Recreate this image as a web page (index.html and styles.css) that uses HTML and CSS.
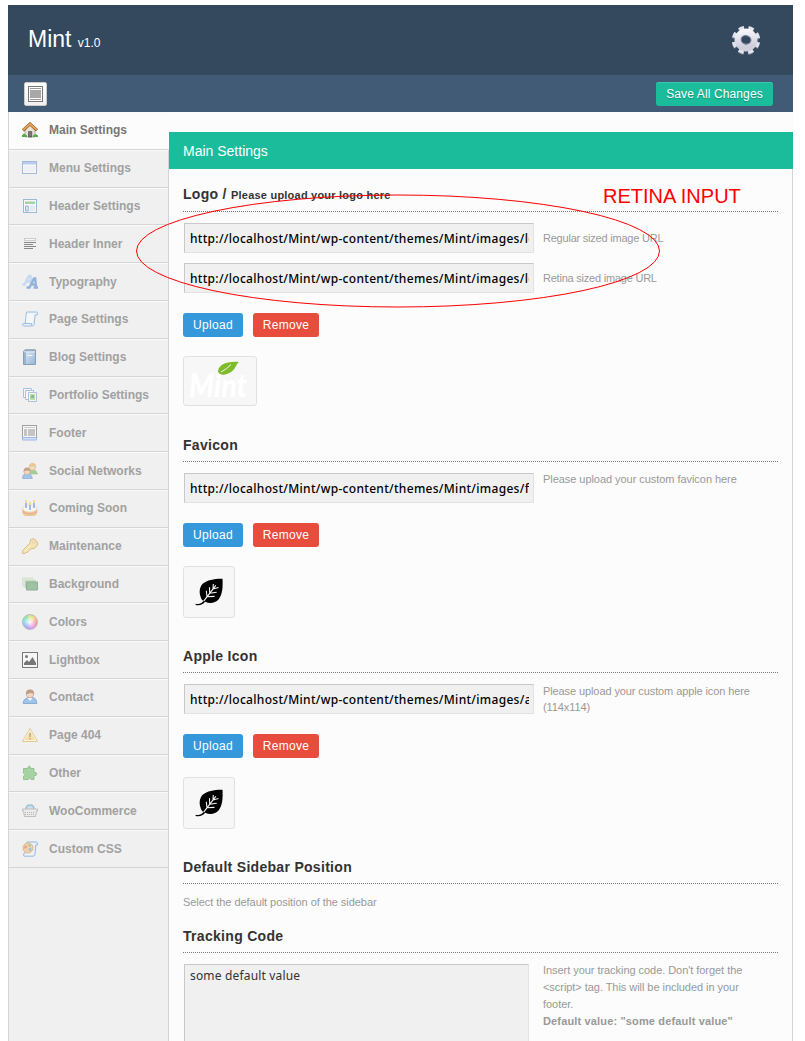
FILE: index.html
```html
<!DOCTYPE html>
<html lang="en">
<head>
<meta charset="utf-8">
<title>Mint</title>
<link rel="stylesheet" href="styles.css">
</head>
<body>
<svg width="0" height="0" class="defs">
  <defs>
    <linearGradient id="silver" x1="0" y1="0" x2="0.3" y2="1"><stop offset="0" stop-color="#f6f6fa"/><stop offset="1" stop-color="#cfcfdc"/></linearGradient>
    <linearGradient id="blueG" x1="0" y1="0" x2="1" y2="1"><stop offset="0" stop-color="#b8daf5"/><stop offset="1" stop-color="#3f80bd"/></linearGradient>
    <symbol id="leaf" viewBox="0 0 28 28">
      <path d="M27.500.8C20 .6 12 2 8 5.600 4.500 9 4 14 5.500 18.500 6 20.500 7 22 8.500 23 6.500 25.500 4.500 26.500.6 25.800L.6 27c4.500.8 7.300-.5 9.600-3.200C15 26 20.500 25 23.500 21.500 27.500 17 28 9 27.500.8Z" fill="#000"/>
      <path d="M8.700 23.200 20.800 7.400M12 18.800l-.7-6M14.700 15.200l-.2-6M18 11l.3-5M12 18.800l7.500-.4M14.700 15.200l7-1M18 11l5.500-1.500" fill="none" stroke="#f7f7f7" stroke-width="1.100"/>
    </symbol>
  </defs>
</svg>
<div class="panel">
  <header class="head">
    <div class="brand">Mint <small>v1.0</small></div>
    <svg class="gear" width="34" height="34" viewBox="0 0 34 34">
      <g transform="rotate(10 17 17)">
        <circle cx="17" cy="18" r="11.700" fill="none" stroke="#77778a" stroke-width="5" stroke-dasharray="5 4.189"/>
        <circle cx="17" cy="17" r="11.700" fill="none" stroke="#e4e4ee" stroke-width="5" stroke-dasharray="5 4.189"/>
        <circle cx="17" cy="17" r="8" fill="none" stroke="url(#silver)" stroke-width="7"/>
        <ellipse cx="17" cy="16.800" rx="5" ry="4.200" fill="#34495e" stroke="#8585a0" stroke-width="1"/>
      </g>
    </svg>
  </header>
  <div class="bar">
    <div class="toggle"><svg width="15" height="16" viewBox="0 0 15 16"><rect x=".5" y=".5" width="14" height="15" fill="#fff" stroke="#777"/><path d="M2 2.500h11M2 13.500h11" stroke="#999"/><path d="M2 4h11v8H2z" fill="#a8a8a8"/></svg></div>
    <div class="btn save">Save All Changes</div>
  </div>
  <div class="body">
    <nav class="menu">
      <div class="item active"><svg viewBox="0 0 16 16"><path d="M3 7.500 8 3l5 4.500V15H3z" fill="#e8e3d8" stroke="#9a927f" stroke-width=".7"/><path d="M6.500 9.500h3.300V15H6.500z" fill="#777" stroke="#444" stroke-width=".6"/><path d="M1 8.400 8 2l7 6.400" fill="none" stroke="#8a4d18" stroke-width="3"/><path d="M1.200 8 8 2l6.800 6" fill="none" stroke="#e3a356" stroke-width="1.900"/><path d="M0 15v-2l2-1.500L5 13.500V15zM11 15v-1.500l2.500-1.500L16 13.500V15z" fill="#54aa4c"/></svg>Main Settings</div>
      <div class="item"><svg viewBox="0 0 16 16"><rect x=".5" y="1.500" width="14" height="12" fill="#fff" stroke="#5b86c9"/><path d="M1 2h13v2.500H1z" fill="#86aee8"/><path d="M2 6h11v6H2z" fill="#edf1f8"/></svg>Menu Settings</div>
      <div class="item"><svg viewBox="0 0 16 16"><rect x="1.500" y="1.500" width="13" height="13" fill="#fff" stroke="#4e82b8"/><path d="M3 3.500h10V6H3z" fill="#64b153"/><path d="M3.500 8h2.700v5H3.500z" fill="#cfe0f8" stroke="#397ac0"/><path d="M7.500 7.500H13v5.500H7.500z" fill="#dce5f2"/></svg>Header Settings</div>
      <div class="item"><svg viewBox="0 0 16 16"><rect x="2.500" y="2.500" width="11" height="2" fill="#fff" stroke="#aaa"/><path d="M2 6.500h12M2 8.500h9M2 10.500h12M2 12.500h9" stroke="#222"/></svg>Header Inner</div>
      <div class="item"><svg viewBox="0 0 16 16"><path d="M.5 10.500h2L7 2h1.500l.5 7M3.500 7.500h5" fill="none" stroke="#9cc6ef" stroke-width="2.400"/><path d="M4.500 13.500h3L12 4.500h1.200l.8 8.500M11.500 13.500H16M8.700 10.500h5" fill="none" stroke="#3977cb" stroke-width="2.400"/></svg>Typography</div>
      <div class="item"><svg viewBox="0 0 16 16"><path d="M4.500 1h10q1.500 0 1 2l-.5 1h-1.800L12 13.500q-.5 1.500-2 1.500H1.500Q0 14.500 1 12.500h2.200z" fill="#e0f0fd" stroke="#4c8ecb"/><path d="M5 2.500h7l-1 9.500H4z" fill="#f8fcff"/><path d="M2 12.500h7.500v2" stroke="#4c8ecb" fill="none"/></svg>Page Settings</div>
      <div class="item"><svg viewBox="0 0 16 16"><path d="M1.500 2.500 3 .8h10.500v14.700h-12z" fill="#4779a8" stroke="#244e78"/><path d="M4 3h9v12H4z" fill="url(#blueG)"/><path d="M5.500 6.500h5" stroke="#fff"/><path d="M2 2.800h11" stroke="#fff" stroke-width=".8"/></svg>Blog Settings</div>
      <div class="item"><svg viewBox="0 0 16 16"><g fill="#fff" stroke="#6a96c8"><path d="M1.500 1.500h8v9h-8z"/><path d="M3.500 3.500h8v9h-8z"/><path d="M6.500 5.500h8v9h-8z"/></g><path d="M8 7h5v6H8z" fill="#8cc763"/><path d="M9 9q1.500-2 3 0v2H9z" fill="#1f7d3b"/></svg>Portfolio Settings</div>
      <div class="item"><svg viewBox="0 0 16 16"><rect x=".5" y=".5" width="14" height="14" fill="#fff" stroke="#555"/><path d="M2 2.500h11" stroke="#aaa"/><path d="M2 4h3v7H2zM6 4h7v7H6z" fill="#999"/><path d="M.5 12.500h14v2.500H.5z" fill="#b9d3fb" stroke="#4a7fd6"/></svg>Footer</div>
      <div class="item"><svg viewBox="0 0 16 16"><path d="M6.500 11q0-4 4-4t5 4z" fill="#5aae45" stroke="#3c8a30" stroke-width=".6"/><circle cx="10.500" cy="4" r="3.300" fill="#f5c58e" stroke="#c28b25" stroke-width=".7"/><path d="M7 4q0-4 3.500-4T14 4q-2-1.500-7 0" fill="#dba335"/><path d="M.6 15.500Q.3 10.500 5 10.500t5.300 5z" fill="#4f9ee8" stroke="#2c6cb8" stroke-width=".7"/><circle cx="5" cy="8.500" r="3.200" fill="#f3be93" stroke="#a45a28" stroke-width=".6"/><path d="M1.700 8.500q0-4 3.300-4t3.300 4Q5 6.500 1.700 8.500" fill="#9a5428"/></svg>Social Networks</div>
      <div class="item"><svg viewBox="0 0 16 16"><path d="M.8 8.500v4Q1 16 7.800 16t7-3.500v-4z" fill="#f1a940" stroke="#c3762a" stroke-width=".6"/><path d="M.8 11.500q7 5 14 0" fill="none" stroke="#e0523f"/><ellipse cx="7.800" cy="8.500" rx="7" ry="3.500" fill="#fffdf5" stroke="#d7bf86" stroke-width=".6"/><path d="M4 3v5M8 5v5M12 3v5" stroke="#5a86dd" stroke-width="2"/><path d="M4 0v3M8 2v3M12 0v3" stroke="#efc51b" stroke-width="1.800"/></svg>Coming Soon</div>
      <div class="item"><svg viewBox="0 0 16 16"><path d="M8.700 1.500 12 .6 15.400 4v3.500L12 10.500l-3 .2L5 14.500l-1.500-.2-.5 1.200H.6v-3l7.200-7.200z" fill="#f9d878" stroke="#c98a22"/><path d="M2 14 9 7" stroke="#fff1b5"/><circle cx="12" cy="4" r="1.300" fill="#fff" stroke="#c98a22" stroke-width=".6"/></svg>Maintenance</div>
      <div class="item"><svg viewBox="0 0 16 16"><path d="M0 2h11v8H0z" fill="#c9dfc6" stroke="#a9cda5" stroke-width=".6"/><path d="M2.500 4H14v8H2.500z" fill="#8dbd88" stroke="#cfe8cb" stroke-width=".6"/><path d="M4.500 6h11v8h-11z" fill="#52945a" stroke="#2e7537"/></svg>Background</div>
      <div class="item"><div class="wheel"></div>Colors</div>
      <div class="item"><svg class="solid" viewBox="0 0 16 16"><rect x=".5" y=".5" width="15" height="15" fill="#f6f6f6" stroke="#777"/><circle cx="4.500" cy="4.500" r="1.500" fill="#777"/><path d="M2 13v-2l3-3 2 2 3.500-5L14 11v2z" fill="#777"/></svg>Lightbox</div>
      <div class="item"><svg viewBox="0 0 16 16"><path d="M1.200 14.500q0-5.500 6.800-6t6.800 6z" fill="#4b9bec" stroke="#2b68b0"/><path d="M5.500 9h5L8 12z" fill="#fff"/><circle cx="8" cy="5" r="3.800" fill="#f2c096" stroke="#985d36" stroke-width=".7"/><path d="M4 5.500Q3.500.5 8 .5t4 5Q10 2.500 4 5.500" fill="#8d4f27"/></svg>Contact</div>
      <div class="item"><svg viewBox="0 0 16 16"><path d="M8 1.500 15.500 14.500H.5z" fill="#fff" stroke="#e0a32a" stroke-linejoin="round"/><path d="M8 4 13.500 13.300h-11z" fill="#fbd45b"/><path d="M8 6v4M8 11v1.500" stroke="#7c5b1c" stroke-width="1.400"/></svg>Page 404</div>
      <div class="item"><svg viewBox="0 0 16 16"><path d="M1.500 3.500H6V2q1-2 2.500 0v1.500h3.500v4h2q1.800 1.500 0 3h-2v4H9q-.2-3-3 0H1.500V11q3-1.200 0-3z" fill="#60b85b" stroke="#3f9640"/></svg>Other</div>
      <div class="item"><svg viewBox="0 0 16 16"><path d="M4 6q0-4 4-4t4 4" fill="#a9cfec" stroke="#4d94c4" stroke-width="1.600"/><path d="M.5 6h15v2h-1l-1 5.500h-11L1.500 8h-1z" fill="#e8e8e8" stroke="#8e8e8e"/><path d="M3 9.500h10M3 11.500h10" stroke="#777" stroke-dasharray="1 1"/></svg>WooCommerce</div>
      <div class="item"><svg viewBox="0 0 16 16"><path d="M5 1h9.500q1.500.5 1 3h-1.700L13 13.500q-.5 1.700-2 1.700H2q-1-1 0-3h1z" fill="#e7f2ff" stroke="#3e85c7"/><circle cx="6" cy="7" r="5" fill="#efb65f" stroke="#d67e3b"/><circle cx="3.500" cy="6" r="1.500" fill="#e2514a"/><circle cx="7.500" cy="4.500" r="1.400" fill="#6bb354"/><circle cx="8" cy="8.500" r="1.500" fill="#4d92df"/></svg>Custom CSS</div>
    </nav>
    <main class="main">
      <h2 class="title">Main Settings</h2>
      <div class="content">
        <section class="group first">
          <h3>Logo / <small>Please upload your logo here</small></h3>
          <div class="row mid"><input value="http://localhost/Mint/wp-content/themes/Mint/images/logo.png"><p>Regular sized image URL</p></div>
          <div class="row mid second"><input value="http://localhost/Mint/wp-content/themes/Mint/images/logo@2x.png"><p>Retina sized image URL</p></div>
          <div class="actions"><span class="btn up">Upload</span><span class="btn rm">Remove</span></div>
          <div class="preview wide"><svg width="72" height="48" viewBox="0 0 72 48"><text x="5" y="40" class="script" textLength="58" lengthAdjust="spacingAndGlyphs">Mint</text><path d="M34 15C34 8 42 4 55 5 51 8 52 15 41 17.500Q36 18.500 34 15Z" fill="#7dbd29"/><path d="M37 15Q43 12 47 7.500" fill="none" stroke="#f7f7f7"/></svg></div>
        </section>
        <section class="group fav">
          <h3>Favicon</h3>
          <div class="row"><input value="http://localhost/Mint/wp-content/themes/Mint/images/favicon.png"><p>Please upload your custom favicon here</p></div>
          <div class="actions"><span class="btn up">Upload</span><span class="btn rm">Remove</span></div>
          <div class="preview"><svg width="28" height="28"><use href="#leaf"/></svg></div>
        </section>
        <section class="group">
          <h3>Apple Icon</h3>
          <div class="row tight"><input value="http://localhost/Mint/wp-content/themes/Mint/images/apple.png"><p>Please upload your custom apple icon here (114x114)</p></div>
          <div class="actions"><span class="btn up">Upload</span><span class="btn rm">Remove</span></div>
          <div class="preview"><svg width="28" height="28"><use href="#leaf"/></svg></div>
        </section>
        <section class="group side">
          <h3>Default Sidebar Position</h3>
          <p>Select the default position of the sidebar</p>
        </section>
        <section class="group track">
          <h3>Tracking Code</h3>
          <div class="row"><textarea>some default value</textarea><p>Insert your tracking code. Don't forget the &lt;script&gt; tag. This will be included in your footer.<br><b>Default value: "some default value"</b></p></div>
        </section>
      </div>
    </main>
  </div>
  <svg class="ring" width="526" height="114" viewBox="0 0 526 114"><ellipse cx="263" cy="57" rx="261.500" ry="56" fill="none" stroke="#f00"/></svg>
  <div class="note">RETINA INPUT</div>
</div>
</body>
</html>
```
FILE: styles.css
```css
* { box-sizing: border-box; }
html, body { height: 100%; overflow: hidden; }
body { margin: 0; padding: 5px 12px 0 8px; background: #fff; font: 12px "Liberation Sans", Arial, sans-serif; color: #333; }
h2, h3, p { margin: 0; }
.defs { position: absolute; }
.panel { position: relative; width: 785px; height: 1036px; overflow: hidden; display: flex; flex-direction: column; }
.head { flex: none; height: 70px; background: #34495e; display: flex; justify-content: space-between; align-items: center; padding: 0 30px 0 20px; color: #fff; }
.brand { padding-top: 1px; font-size: 23px; line-height: 26px; }
.brand small { font-size: 12px; }
.bar { flex: none; height: 37px; background: #415b76; display: flex; justify-content: space-between; align-items: center; padding: 0 20px 0 16px; }
.toggle { width: 23px; height: 24px; background: linear-gradient(#fff, #f1f1f1); border: 1px solid #ccc; border-radius: 2px; display: flex; align-items: center; justify-content: center; }
.btn { height: 24px; line-height: 25px; border-radius: 3px; color: #fff; font-size: 12px; letter-spacing: .3px; text-align: center; }
.save { width: 117px; background: #1abc9c; box-shadow: inset 0 1px #3bc9ad; text-shadow: 0 1px 1px #148f77; letter-spacing: .12px; }
.body { flex: 1; display: flex; background: #fcfcfc; border-left: 1px solid #d5d5d5; }
.menu { width: 160px; background: linear-gradient(90deg, #f0f0f0 159px, #d5d5d5 159px); }
.item { height: 37.8px; display: flex; align-items: center; gap: 11px; padding: 0 0 0 13px; font-weight: bold; color: #a1a1a1; border-bottom: 1px solid #d5d5d5; border-right: 1px solid #d5d5d5; box-shadow: inset 0 1px #fafafa; }
.item svg { width: 16px; height: 16px; opacity: .5; }
.item .solid { opacity: 1; }
.item.active { background: #fcfcfc; color: #777; border-right-color: #fcfcfc; }
.item.active svg { opacity: 1; }
.wheel { width: 16px; height: 16px; border-radius: 50%; opacity: .6; border: 1px solid #999; background: radial-gradient(circle, #fff 5%, transparent 65%), conic-gradient(#cde645, #ffb52e 50deg, #ff5a68 95deg, #e45bee 155deg, #6c78fa 215deg, #40d3eb 275deg, #4ee06c 325deg, #cde645); }
.main { flex: 1; padding-top: 20px; }
.title { height: 37px; padding-left: 14px; line-height: 38px; background: #1abc9c; color: #fff; font-size: 14px; font-weight: normal; }
.content { height: 872px; padding: 0 14px; border-right: 1px solid #d5d5d5; }
.group { padding-top: 24px; }
.fav { padding-top: 25px; }
.group h3 { height: 31px; line-height: 29px; border-bottom: 1px dotted #777; font-size: 14px; letter-spacing: .3px; white-space: nowrap; }
.group.first { padding-top: 12px; }
.first h3 { line-height: 27px; }
.group h3 small { font-size: 11px; letter-spacing: .22px; }
.row { display: flex; gap: 9px; margin-top: 11px; padding-left: 1px; }
.row.second { margin-top: 10px; }
.row.mid { align-items: center; }
.row p, .side p { font-size: 11px; line-height: 17px; color: #999; letter-spacing: -.05px; }
.row p { flex: 0 0 216px; }
.row:not(.mid) p { margin-top: -2px; }
.row.mid p { letter-spacing: -.22px; }
.row.tight { height: 30px; }
.row.tight p { line-height: 16px; letter-spacing: -.1px; margin-top: -1px; }
.row b { letter-spacing: .15px; }
input, textarea { display: block; flex: none; margin: 0; border: 1px solid #e2e2e2; border-top-color: #c8c8c8; border-left-color: #c8c8c8; border-radius: 0; outline: 0; background: #f0f0f0; font-family: "Noto Sans", sans-serif; font-size: 12px; }
input { width: 350px; height: 30px; padding: 0 4px 0 5px; color: #000; font-weight: 500; letter-spacing: .3px; }
textarea { width: 345px; height: 120px; padding: 2px 5px; color: #333; letter-spacing: .17px; resize: none; overflow: hidden; }
.track .row { gap: 14px; }
.actions { display: flex; gap: 10px; margin-top: 20px; }
.up { width: 60px; background: #3498db; }
.rm { width: 66px; background: #e74c3c; }
.preview { margin-top: 19px; width: 52px; height: 52px; border: 1px solid #e1e1e1; border-radius: 3px; background: #f7f7f7; display: flex; align-items: center; justify-content: center; }
.preview.wide { width: 74px; height: 50px; }
.script { font: italic 900 33px Lato, sans-serif; fill: #fff; }
.side p { margin-top: 10px; }
.group.track { padding-top: 11px; }
.ring { position: absolute; left: 127px; top: 189px; }
.note { position: absolute; left: 595px; top: 180px; font-size: 20px; line-height: 23px; color: #f00; white-space: nowrap; }
```
